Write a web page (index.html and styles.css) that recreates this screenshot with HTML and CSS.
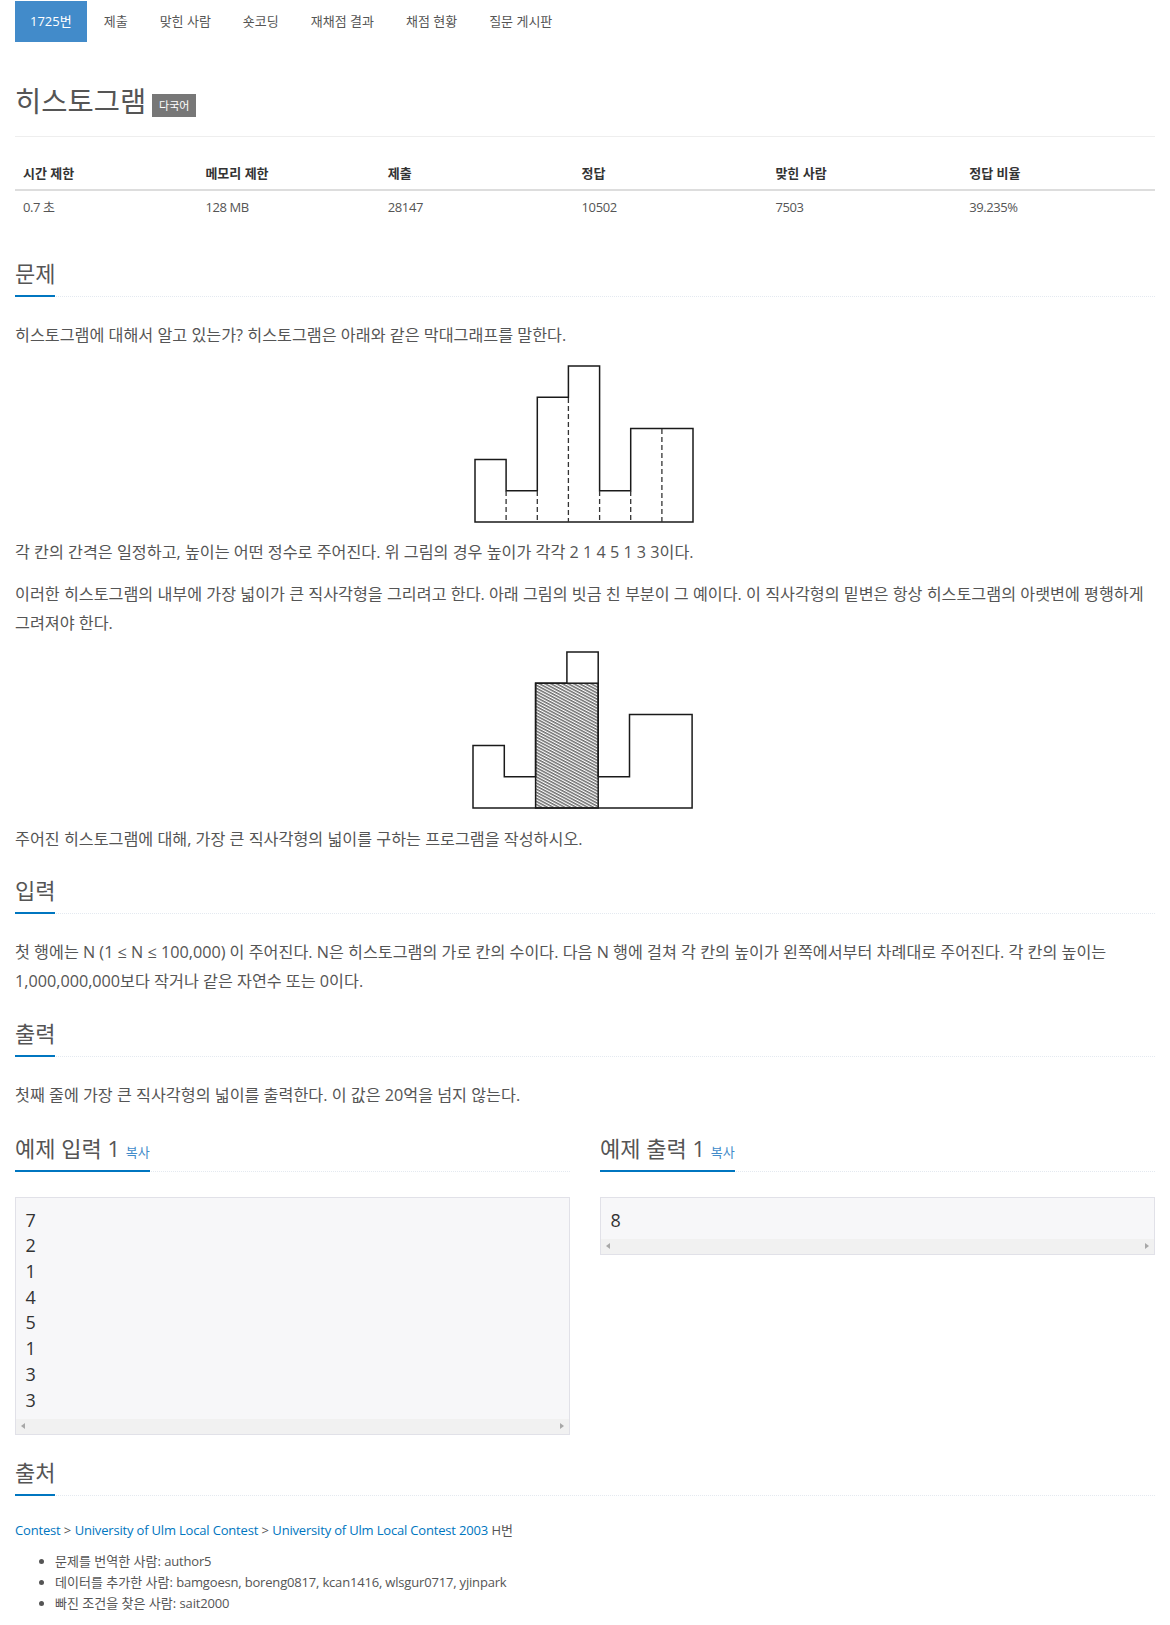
FILE: index.html
```html
<!DOCTYPE html>
<html lang="ko">
<head>
<meta charset="utf-8">
<title>히스토그램</title>
<link rel="stylesheet" href="styles.css">
</head>
<body>
<div class="container">
  <ul class="menu">
    <li class="active"><a>1725번</a></li>
    <li><a>제출</a></li>
    <li><a>맞힌 사람</a></li>
    <li><a>숏코딩</a></li>
    <li><a>재채점 결과</a></li>
    <li><a>채점 현황</a></li>
    <li><a>질문 게시판</a></li>
  </ul>

  <div class="page-header">
    <h1><span class="title">히스토그램</span><span class="badge">다국어</span></h1>
  </div>

  <table class="info">
    <thead>
      <tr><th class="c16">시간 제한</th><th class="c16">메모리 제한</th><th class="c17">제출</th><th class="c17">정답</th><th class="c17">맞힌 사람</th><th class="c17">정답 비율</th></tr>
    </thead>
    <tbody>
      <tr><td>0.7 초</td><td>128 MB</td><td>28147</td><td>10502</td><td>7503</td><td>39.235%</td></tr>
    </tbody>
  </table>

  <section class="section">
    <div class="headline"><h2>문제</h2></div>
    <div class="text">
      <p>히스토그램에 대해서 알고 있는가? 히스토그램은 아래와 같은 막대그래프를 말한다.</p>
      <div class="figure figure1">
        <svg width="230" height="168" viewBox="0 0 230 168">
          <path d="M5,162 V99.6 H36.1 V130.8 H67.3 V37.2 H98.4 V6 H129.6 V130.8 H160.7 V68.4 H223 V162 Z" fill="none" stroke="#1a1a1a" stroke-width="1.5"/>
          <g stroke="#333" stroke-width="1.3" stroke-dasharray="5,3">
            <line x1="36.1" y1="131" x2="36.1" y2="162"/>
            <line x1="67.3" y1="131" x2="67.3" y2="162"/>
            <line x1="98.4" y1="38" x2="98.4" y2="162"/>
            <line x1="129.6" y1="131" x2="129.6" y2="162"/>
            <line x1="160.7" y1="131" x2="160.7" y2="162"/>
            <line x1="191.9" y1="69" x2="191.9" y2="162"/>
          </g>
        </svg>
      </div>
      <p>각 칸의 간격은 일정하고, 높이는 어떤 정수로 주어진다. 위 그림의 경우 높이가 각각 2 1 4 5 1 3 3이다.</p>
      <p>이러한 히스토그램의 내부에 가장 넓이가 큰 직사각형을 그리려고 한다. 아래 그림의 빗금 친 부분이 그 예이다. 이 직사각형의 밑변은 항상 히스토그램의 아랫변에 평행하게 그려져야 한다.</p>
      <div class="figure figure2">
        <svg width="230" height="168" viewBox="0 0 230 168">
          <defs>
            <pattern id="hatch" width="2.7" height="2.7" patternUnits="userSpaceOnUse" patternTransform="rotate(28)">
              <line x1="0" y1="0.8" x2="2.7" y2="0.8" stroke="#222" stroke-width="1"/>
            </pattern>
          </defs>
          <path d="M3,162 V99.6 H34.3 V130.8 H65.6 V37.2 H96.9 V6 H128.2 V130.8 H159.5 V68.4 H222.1 V162 Z" fill="none" stroke="#1a1a1a" stroke-width="1.5"/>
          <rect x="65.6" y="37.2" width="62.6" height="124.8" fill="url(#hatch)" stroke="#1a1a1a" stroke-width="1.5"/>
        </svg>
      </div>
      <p>주어진 히스토그램에 대해, 가장 큰 직사각형의 넓이를 구하는 프로그램을 작성하시오.</p>
    </div>
  </section>

  <section class="section">
    <div class="headline"><h2>입력</h2></div>
    <div class="text">
      <p>첫 행에는 N (1 ≤ N ≤ 100,000) 이 주어진다. N은 히스토그램의 가로 칸의 수이다. 다음 N 행에 걸쳐 각 칸의 높이가 왼쪽에서부터 차례대로 주어진다. 각 칸의 높이는 1,000,000,000보다 작거나 같은 자연수 또는 0이다.</p>
    </div>
  </section>

  <section class="section">
    <div class="headline"><h2>출력</h2></div>
    <div class="text">
      <p>첫째 줄에 가장 큰 직사각형의 넓이를 출력한다. 이 값은 20억을 넘지 않는다.</p>
    </div>
  </section>

  <div class="samples">
    <section class="sample">
      <div class="headline"><h2>예제 입력 1 <a class="copy">복사</a></h2></div>
      <div class="pre">
        <pre>7
2
1
4
5
1
3
3</pre>
        <div class="hscroll"><span class="arr left"></span><span class="arr right"></span></div>
      </div>
    </section>
    <section class="sample">
      <div class="headline"><h2>예제 출력 1 <a class="copy">복사</a></h2></div>
      <div class="pre">
        <pre>8</pre>
        <div class="hscroll"><span class="arr left"></span><span class="arr right"></span></div>
      </div>
    </section>
  </div>

  <section class="section source">
    <div class="headline"><h2>출처</h2></div>
    <p class="crumbs"><a class="lat">Contest</a> &gt; <a class="lat">University of Ulm Local Contest</a> &gt; <a class="lat">University of Ulm Local Contest 2003</a> H번</p>
    <ul class="credits">
      <li>문제를 번역한 사람: <span class="lat">author5</span></li>
      <li>데이터를 추가한 사람: <span class="lat">bamgoesn, boreng0817, kcan1416, wlsgur0717, yjinpark</span></li>
      <li>빠진 조건을 찾은 사람: <span class="lat">sait2000</span></li>
    </ul>
  </section>
</div>
</body>
</html>
```

FILE: styles.css
```css
* { box-sizing: border-box; }

html, body {
  margin: 0;
  padding: 0;
  background: #fff;
}

body {
  font-family: "Open Sans", "Noto Sans CJK KR", sans-serif;
  font-size: 13px;
  line-height: 1.42857;
  color: #555;
}

.container {
  width: 1170px;
  padding: 0 15px;
}

/* top menu */
.menu {
  list-style: none;
  margin: 1px 0 0;
  padding: 0;
  display: flex;
}
.menu li { margin-left: 2px; }
.menu li:first-child { margin-left: 0; }
.menu a {
  display: block;
  padding: 10px 15px;
  line-height: 21px;
  font-size: 13px;
  color: #555;
}
.menu li.active a {
  background: #428bca;
  color: #fff;
}

/* title */
.page-header {
  margin: 44px 0 20px;
  padding-bottom: 18.5px;
  border-bottom: 1px solid #eee;
}
.page-header h1 {
  margin: 0;
  height: 31px;
  font-size: 28.5px;
  font-weight: normal;
  line-height: 31px;
  color: #555;
  display: flex;
  align-items: flex-start;
}
.badge {
  display: block;
  margin-left: 6px;
  margin-top: 7.5px;
  background: #777;
  color: #fff;
  font-size: 11px;
  line-height: 23px;
  height: 23px;
  padding: 0 7px;
}

/* info table */
.info {
  width: 100%;
  border-collapse: collapse;
  margin-bottom: 36px;
}
.info th, .info td {
  text-align: left;
  padding: 7px 8px;
  line-height: 18.57px;
  font-size: 13px;
}
.info th {
  color: #333;
  font-weight: bold;
  border-bottom: 2px solid #ddd;
}
.info td {
  color: #555;
  letter-spacing: -0.4px;
}
.c16 { width: 16%; }
.c17 { width: 17%; }

/* sections */
.section { margin-top: 23.5px; }
.headline {
  border-bottom: 1px dotted #e4e9f0;
  margin: 0 0 24px;
}
.headline h2 {
  display: inline-block;
  margin: 0 0 -1px;
  padding-bottom: 9px;
  border-bottom: 2px solid #0076c0;
  font-size: 22px;
  font-weight: normal;
  line-height: 26px;
  color: #555;
}
.copy {
  font-size: 13px;
  line-height: 1;
  color: #428bca;
}

.text p {
  margin: 0 0 13px;
  font-size: 16.2px;
  line-height: 29px;
}
.figure {
  display: flex;
  justify-content: center;
}
.figure svg { display: block; }
.figure1 { margin: -2.5px 0 9.5px; }
.figure2 { margin: -5px 0 11px; }

/* samples */
.samples {
  display: grid;
  grid-template-columns: 555px 555px;
  column-gap: 30px;
  margin-top: 25.5px;
}
.sample .headline { margin-bottom: 25px; }
.pre {
  border: 1px solid #e1e1e8;
  background: #f7f7f9;
}
.pre pre {
  margin: 0;
  padding: 9.5px 9.5px 6px;
  font-family: "Open Sans", sans-serif;
  font-size: 18px;
  line-height: 25.7px;
  color: #333;
}
.hscroll {
  height: 15px;
  background: #f1f1f1;
  position: relative;
}
.arr {
  position: absolute;
  top: 4px;
  width: 0;
  height: 0;
  border-top: 3.5px solid transparent;
  border-bottom: 3.5px solid transparent;
}
.arr.left { left: 5px; border-right: 4px solid #a8a8a8; }
.arr.right { right: 5px; border-left: 4px solid #a8a8a8; }

/* source */
.source { margin-top: 23.5px; }
.source .headline { margin-bottom: 25px; }
.crumbs {
  margin: 0 0 12px;
  font-size: 13px;
}
.crumbs a { color: #0076c0; }
.lat { letter-spacing: -0.18px; }
.credits {
  margin: 0;
  padding-left: 40px;
  font-size: 13px;
}
.credits li { line-height: 20.7px; }
```
